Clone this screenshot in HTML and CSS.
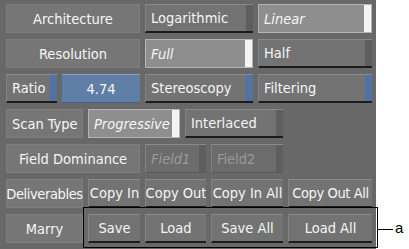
FILE: index.html
```html
<!DOCTYPE html>
<html lang="en">
<head>
    <meta charset="UTF-8">
    <title>Format Settings</title>
    <link rel="stylesheet" href="styles.css">
</head>
<body>

<div class="panel">
    <div class="grid">
        <!-- row 1 -->
        <div class="label span3">Architecture</div>
        <div class="btn span3 left">Logarithmic<span class="ind"></span></div>
        <div class="btn sel span2 left">Linear<span class="ind"></span></div>

        <!-- row 2 -->
        <div class="label span3">Resolution</div>
        <div class="btn sel span3 left">Full<span class="ind"></span></div>
        <div class="btn span2 left">Half<span class="ind"></span></div>

        <!-- row 3 -->
        <div class="btn left">Ratio<span class="ind blue"></span></div>
        <div class="field span2">4.74</div>
        <div class="btn span3 left">Stereoscopy<span class="ind blue"></span></div>
        <div class="btn span2 left">Filtering<span class="ind blue"></span></div>

        <!-- row 4 -->
        <div class="label span2 left">Scan Type</div>
        <div class="btn sel span2 left">Progressive<span class="ind"></span></div>
        <div class="btn span3 left">Interlaced<span class="ind"></span></div>
        <div class="blank"></div>

        <!-- row 5 -->
        <div class="label span3">Field Dominance</div>
        <div class="btn dim span2 left">Field1<span class="ind"></span></div>
        <div class="btn off span2 left">Field2<span class="ind"></span></div>
        <div class="blank"></div>

        <!-- row 6 -->
        <div class="label span2 tight">Deliverables</div>
        <div class="btn">Copy In</div>
        <div class="btn span2">Copy Out</div>
        <div class="btn span2">Copy In All</div>
        <div class="btn tight">Copy Out All</div>

        <!-- row 7 -->
        <div class="label span2">Marry</div>
        <div class="btn">Save</div>
        <div class="btn span2">Load</div>
        <div class="btn span2">Save All</div>
        <div class="btn">Load All</div>
    </div>
</div>

<!-- callout drawn over the screenshot -->
<div class="callout"></div>
<div class="callout-line"></div>
<div class="callout-tag">a</div>

</body>
</html>
```

FILE: styles.css
```css
body {
    margin: 0;
    background: #ffffff;
    font-family: "DejaVu Sans Condensed", "DejaVu Sans", sans-serif;
    font-stretch: condensed;
    font-size: 14.5px;
    color: #f6f6f6;
}
.panel {
    width: 376px;
    height: 249px;
    background: #686868;
    box-sizing: border-box;
    padding: 4px 0 0 6px;
}
.grid {
    display: grid;
    grid-template-columns: 51px 21px 52px 35px 21px 42px 25px 84px;
    grid-auto-rows: 29px;
    column-gap: 5px;
    row-gap: 6px;
}
.span2 { grid-column: span 2; }
.span3 { grid-column: span 3; }

.label, .btn, .field {
    position: relative;
    display: flex;
    align-items: center;
    justify-content: center;
    box-sizing: border-box;
    white-space: nowrap;
}
.btn {
    overflow: hidden;
}
.left {
    justify-content: flex-start;
    padding-left: 5px;
}
.tight {
    letter-spacing: -0.4px;
}
.label {
    background: #767676;
    border: 1px solid #7e7e7e;
}
.btn {
    background: #737373;
    border-top: 1px solid #8a8a8a;
    border-left: 1px solid #828282;
    border-bottom: 2px solid #1c1c1c;
}
.btn.sel {
    background: #8e8e8e;
    border: 1px solid #b4b4b4;
    font-style: italic;
}
.btn.dim, .btn.off {
    background: #6c6c6c;
    border-bottom: 1px solid #5a5a5a;
    color: #9a9a9a;
}
.btn.dim {
    font-style: italic;
}
.ind {
    position: absolute;
    top: 0;
    right: 0;
    bottom: 0;
    width: 7px;
    background: #5e5e5e;
}
.sel .ind {
    background: #f4f4f4;
}
.ind.blue {
    background: #5272a6;
}
.field {
    background: #5f7fa7;
    border-top: 1px solid #8aa2c0;
    border-bottom: 1px solid #47638a;
}

.callout {
    position: absolute;
    left: 83px;
    top: 207px;
    width: 295px;
    height: 41px;
    border: 1px solid #000;
    box-sizing: border-box;
}
.callout-line {
    position: absolute;
    left: 378px;
    top: 229px;
    width: 15px;
    height: 1px;
    background: #000;
}
.callout-tag {
    position: absolute;
    left: 395px;
    top: 219px;
    font-family: "Liberation Sans", Arial, sans-serif;
    font-stretch: normal;
    font-size: 15px;
    color: #000;
}
```
